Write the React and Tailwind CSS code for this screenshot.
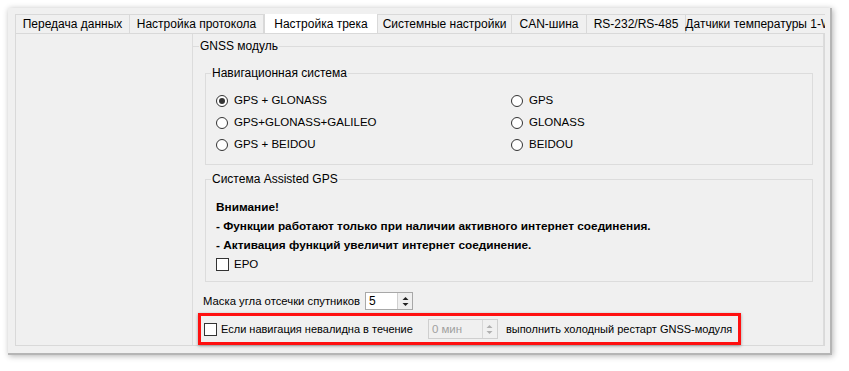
import React from "react";

const tabs = [
  { label: "Передача данных", w: "w-[115px]" },
  { label: "Настройка протокола", w: "w-[134px]" },
  { label: "Настройка трека", w: "w-[114px]", active: true },
  { label: "Системные настройки", w: "w-[134px]" },
  { label: "CAN-шина", w: "w-[75px]" },
  { label: "RS-232/RS-485", w: "w-[99px]" },
  { label: "Датчики температуры 1-Wire", w: "w-[160px]" },
];

function Radio({ checked, label }) {
  return (
    <div className="flex items-center h-[22px] gap-[6px]">
      <span className="w-[12px] h-[12px] rounded-full border border-[#333] bg-white flex items-center justify-center">
        {checked && <span className="w-[6px] h-[6px] rounded-full bg-[#333]" />}
      </span>
      <span className="text-[11.5px]">{label}</span>
    </div>
  );
}

function Checkbox() {
  return <span className="w-[13px] h-[13px] border border-[#333] bg-white shrink-0" />;
}

function Arrows({ color }) {
  return (
    <svg width="7" height="11" viewBox="0 0 7 11">
      <path d="M0.5 4 L3.5 1 L6.5 4 Z" fill={color} />
      <path d="M0.5 7 L3.5 10 L6.5 7 Z" fill={color} />
    </svg>
  );
}

// title row of a Qt group box: line, title, line
function GroupBox({ title, className, children }) {
  return (
    <div className={className}>
      <div className="flex h-[14px]">
        <div className="w-[6px] h-[7px] self-end border-t border-l border-[#dcdcdc]" />
        <span className="px-[1px] text-[12px] leading-[14px]">{title}</span>
        <div className="flex-1 h-[7px] self-end border-t border-r border-[#dcdcdc]" />
      </div>
      <div className="border-l border-r border-b border-[#dcdcdc]">{children}</div>
    </div>
  );
}

export default function App() {
  return (
    <div className="w-[849px] h-[371px] bg-white pt-[8px] pl-[8px] font-['Liberation_Sans',Arial,sans-serif] text-black">
      <div className="w-[824px] h-[347px] bg-[#f0f0f0] shadow-[1px_1px_6px_rgba(0,0,0,0.3)] border-r-2 border-b-2 border-[#b5b5b5] flex flex-col pl-[7px] pr-[5px] pt-[6px] pb-[7px]">
        <div className="flex items-end h-[21px] overflow-hidden">
          {tabs.map((t) =>
            t.active ? (
              <div
                key={t.label}
                className={`${t.w} shrink-0 h-[22px] -mb-px relative z-10 bg-white border border-b-0 border-[#d9d9d9] flex items-center justify-center text-[12px]`}
              >
                {t.label}
              </div>
            ) : (
              <div
                key={t.label}
                className={`${t.w} shrink-0 h-[19px] border border-b-0 border-l-0 first:border-l border-[#d9d9d9] flex items-center justify-center text-[12px] whitespace-nowrap`}
              >
                {t.label}
              </div>
            )
          )}
        </div>
        <div className="flex-1 border border-[#d9d9d9] flex">
          <div className="w-[176px] shrink-0" />
          <div className="w-[632px] border-l border-r border-[#dcdcdc] pt-[5px]">
            <div className="flex h-[14px]">
              <div className="w-[6px] h-[7px] self-end border-t border-[#dcdcdc]" />
              <span className="px-[1px] text-[12px] leading-[14px]">GNSS модуль</span>
              <div className="flex-1 h-[7px] self-end border-t border-[#dcdcdc]" />
            </div>
            <GroupBox title="Навигационная система" className="ml-[12px] mr-[10px] mt-[13px]">
              <div className="grid grid-cols-[295px_1fr] pl-[10px] pt-[10px] pb-[8px]">
                <Radio checked label="GPS + GLONASS" />
                <Radio label="GPS" />
                <Radio label="GPS+GLONASS+GALILEO" />
                <Radio label="GLONASS" />
                <Radio label="GPS + BEIDOU" />
                <Radio label="BEIDOU" />
              </div>
            </GroupBox>
            <GroupBox title="Система Assisted GPS" className="ml-[12px] mr-[10px] mt-[7px]">
              <div className="pl-[10px] pt-[12px] pb-[7px] text-[11.8px] font-bold whitespace-nowrap">
                <div className="h-[19px] flex items-center">Внимание!</div>
                <div className="h-[19px] flex items-center">
                  - Функции работают только при наличии активного интернет соединения.
                </div>
                <div className="h-[19px] flex items-center">
                  - Активация функций увеличит интернет соединение.
                </div>
                <div className="h-[19px] flex items-center gap-[5px] font-normal text-[11.5px]">
                  <Checkbox />
                  <span>EPO</span>
                </div>
              </div>
            </GroupBox>
            <div className="ml-[10px] mt-[10px] flex items-center gap-[5px] text-[11.3px] whitespace-nowrap">
              <span>Маска угла отсечки спутников</span>
              <div className="w-[48px] h-[18px] bg-white border border-[#a8a8a8] flex items-stretch text-[12px]">
                <span className="flex-1 pl-[3px] leading-[16px]">5</span>
                <div className="w-[15px] border-l border-[#d0d0d0] bg-[#f0f0f0] flex items-center justify-center">
                  <Arrows color="#222" />
                </div>
              </div>
            </div>
            <div className="ml-[5px] mt-[3px] w-[543px] h-[32px] border-[3px] border-[#ff1010] shadow-[0_1px_3px_rgba(0,0,0,0.35)] flex items-center pl-[3px] text-[11px] whitespace-nowrap">
              <Checkbox />
              <span className="ml-[4px]">Если навигация невалидна в течение</span>
              <div className="ml-[15px] w-[70px] h-[20px] shrink-0 border border-[#cfcfcf] bg-[#f0f0f0] flex items-stretch">
                <span className="flex-1 pl-[3px] leading-[18px] text-[#a0a0a0] text-[11.5px]">0 мин</span>
                <div className="w-[15px] border-l border-[#d8d8d8] flex items-center justify-center">
                  <Arrows color="#b0b0b0" />
                </div>
              </div>
              <span className="ml-[8px]">выполнить холодный рестарт GNSS-модуля</span>
            </div>
          </div>
        </div>
      </div>
    </div>
  );
}
